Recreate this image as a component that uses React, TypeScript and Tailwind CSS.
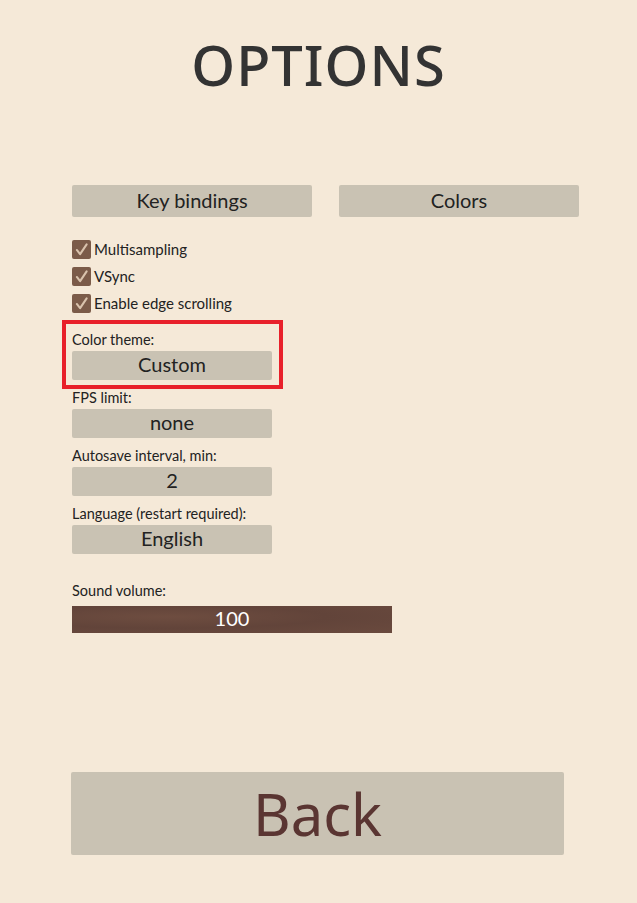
const body = { fontFamily: "Lato, 'Open Sans', sans-serif" };
const title = { fontFamily: "'Noto Sans', 'DejaVu Sans', sans-serif" };

function Check({ label }: { label: string }) {
  return (
    <div className="flex items-center h-[27px]">
      <div className="w-[19px] h-[19px] bg-[#7b5b49] rounded-[2px] flex items-center justify-center">
        <svg width="15" height="15" viewBox="0 0 16 16">
          <path d="M3 8.5 L6.5 13 L13.5 2.5" fill="none" stroke="#d9c3ad" strokeWidth="2.2" strokeLinecap="round" strokeLinejoin="round" />
        </svg>
      </div>
      <span className="ml-[3px] text-[15px] text-[#222]">{label}</span>
    </div>
  );
}

function Field({ label, value }: { label: string; value: string }) {
  return (
    <div className="flex flex-col">
      <div className="text-[14.5px] leading-[20px] text-[#222] h-[21px]">{label}</div>
      <div className="w-[200px] h-[29px] bg-[#c9c2b3] rounded-[2px] flex items-center justify-center text-[20px] text-[#222] pb-[4px]">
        {value}
      </div>
    </div>
  );
}

export default function App() {
  return (
    <div className="w-[637px] h-[903px] bg-[#f5e9d8] flex flex-col" style={body}>
      <div className="h-[185px] pt-[36px]">
        <h1 className="text-center text-[56px] leading-none font-medium tracking-[1px] text-[#333]" style={title}>
          OPTIONS
        </h1>
      </div>
      <div className="pl-[72px] flex flex-col">
        <div className="flex gap-[27px]">
          <div className="w-[240px] shrink-0 h-[32px] pb-[3px] bg-[#c9c2b3] rounded-[2px] flex items-center justify-center text-[20px] text-[#222]">Key bindings</div>
          <div className="w-[240px] shrink-0 h-[32px] pb-[3px] bg-[#c9c2b3] rounded-[2px] flex items-center justify-center text-[20px] text-[#222]">Colors</div>
        </div>
        <div className="flex flex-col pt-[19px]">
          <Check label="Multisampling" />
          <Check label="VSync" />
          <Check label="Enable edge scrolling" />
        </div>
        <div className="flex flex-col pt-[13px] gap-[8px]">
          <div className="relative">
            <Field label="Color theme:" value="Custom" />
            <div className="absolute left-[-10px] top-[-10px] w-[221px] h-[69px] border-4 border-[#e8202a]" />
          </div>
          <Field label="FPS limit:" value="none" />
          <Field label="Autosave interval, min:" value="2" />
          <Field label="Language (restart required):" value="English" />
        </div>
        <div className="pt-[27px] flex flex-col">
          <div className="text-[14.5px] leading-[20px] text-[#222] h-[25px]">Sound volume:</div>
          <div className="w-[320px] h-[27px] pb-[3px] bg-[#6b4a3e] flex items-center justify-center text-[20px] text-white"
            style={{ backgroundImage: "radial-gradient(ellipse at 30% 40%, #6e4d40 0%, #62443a 50%, #6a4a3e 100%)" }}>
            100
          </div>
        </div>
      </div>
      <div className="flex-1" />
      <div className="px-[71px] pb-[48px]">
        <div className="w-[493px] h-[83px] bg-[#c9c2b3] rounded-[2px] flex items-center justify-center text-[58px] text-[#5a3532]" style={title}>
          Back
        </div>
      </div>
    </div>
  );
}
